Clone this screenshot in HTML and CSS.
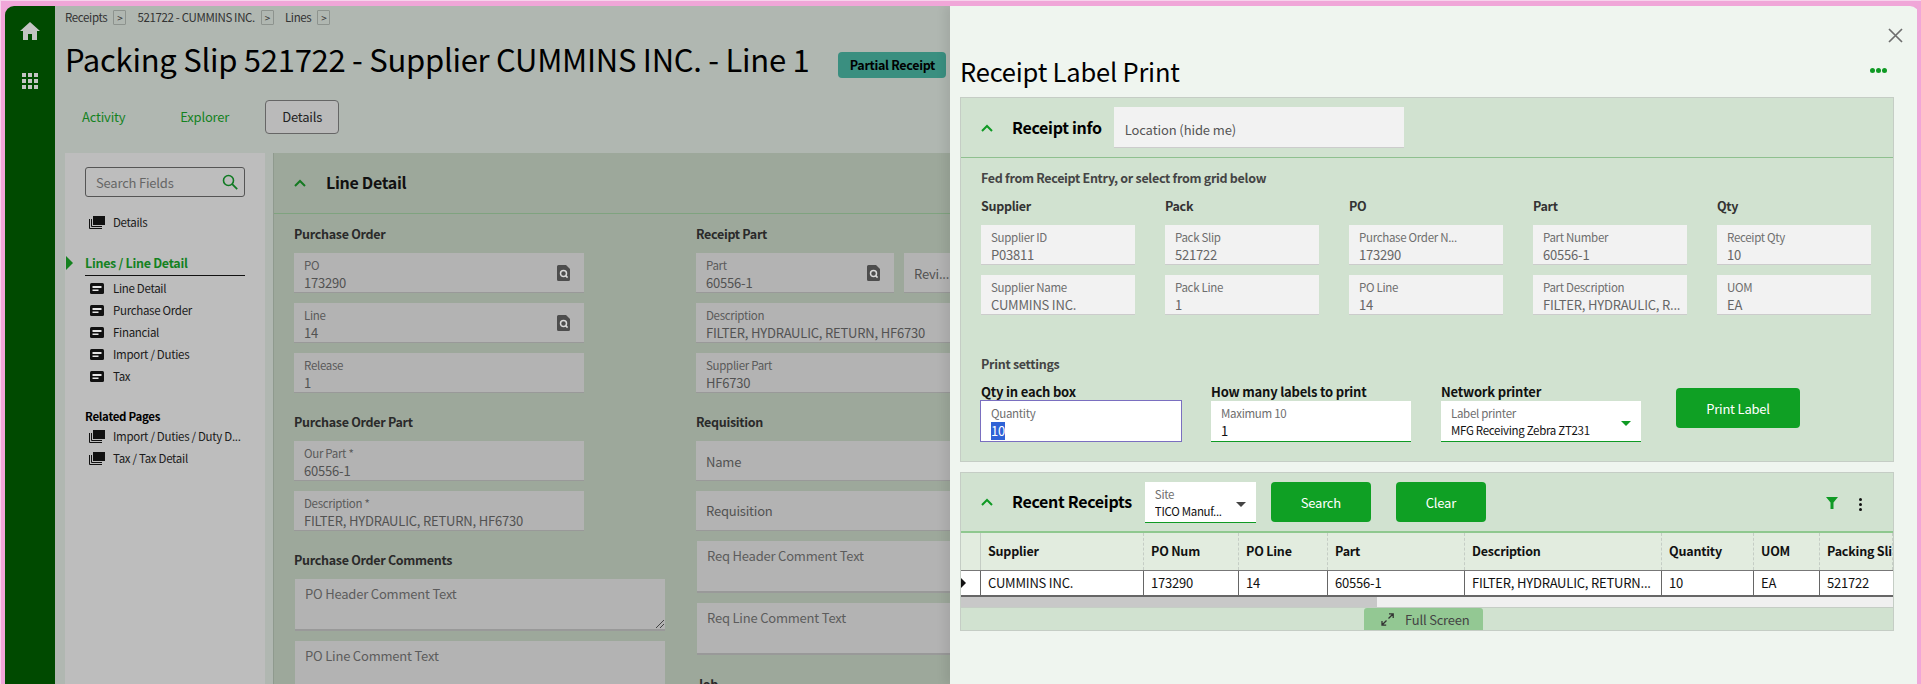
FILE: index.html
```html
<!DOCTYPE html>
<html lang="en">
<head>
<meta charset="utf-8">
<title>Receipt Label Print</title>
<link rel="stylesheet" href="styles.css">
</head>
<body>
<svg class="defs" width="0" height="0" aria-hidden="true">
  <symbol id="i-chev" viewBox="0 0 12 8"><path d="M1 7l5-5 5 5" fill="none" stroke="currentColor" stroke-width="2"/></symbol>
  <symbol id="i-stack" viewBox="0 0 16 13"><path d="M4 0h12v9H4z" fill="currentColor"/><path d="M.5 3v9.5H13" fill="none" stroke="currentColor" stroke-width="1"/><path d="M2.5 3v7.500H13" fill="none" stroke="currentColor" stroke-width="1"/></symbol>
  <symbol id="i-card" viewBox="0 0 14 11"><rect width="14" height="11" rx="1.500" fill="currentColor"/><path d="M2.500 3h9v2h-9zM2.500 6.500h6v1.500h-6z" fill="#e6e6e6"/></symbol>
  <symbol id="i-lookup" viewBox="0 0 13 16"><path d="M1.500 0H9l4 4v10.500a1.500 1.500 0 0 1-1.500 1.500h-10A1.500 1.500 0 0 1 0 14.500v-13A1.500 1.500 0 0 1 1.500 0z" fill="#4d4d4d"/><circle cx="6.500" cy="8.500" r="3" fill="none" stroke="#d8d8d8" stroke-width="1.500"/><path d="M8.600 10.600l2 2" stroke="#d8d8d8" stroke-width="1.500"/></symbol>
</svg>
<div class="app">
  <nav class="rail">
    <svg class="rail-home" viewBox="0 0 20 18"><path d="M10 0l10 9h-3v9h-5v-6H8v6H3V9H0z" fill="#c4c4c4"/></svg>
    <div class="rail-grid"><i></i><i></i><i></i><i></i><i></i><i></i><i></i><i></i><i></i></div>
  </nav>

  <main class="page">
    <div class="crumbs">
      <span>Receipts</span><b class="crumb-btn">&gt;</b>
      <span>521722 - CUMMINS INC.</span><b class="crumb-btn">&gt;</b>
      <span>Lines</span><b class="crumb-btn">&gt;</b>
    </div>
    <div class="title-row">
      <h1 class="page-title">Packing Slip 521722 - Supplier CUMMINS INC. - Line 1</h1>
      <span class="badge">Partial Receipt</span>
    </div>
    <div class="tabs">
      <a class="tab">Activity</a>
      <a class="tab">Explorer</a>
      <a class="tab tab-on">Details</a>
    </div>
    <div class="work">
      <aside class="side">
        <div class="search">
          <span>Search Fields</span>
          <svg viewBox="0 0 16 16"><circle cx="6.500" cy="6.500" r="5" fill="none" stroke="#0f7a22" stroke-width="1.600"/><path d="M10.200 10.200l5 5" stroke="#0f7a22" stroke-width="1.800"/></svg>
        </div>
        <div class="side-item side-top"><svg class="ic-stack"><use href="#i-stack"/></svg>Details</div>
        <div class="side-group">Lines / Line Detail</div>
        <div class="side-item"><svg class="ic-card"><use href="#i-card"/></svg>Line Detail</div>
        <div class="side-item"><svg class="ic-card"><use href="#i-card"/></svg>Purchase Order</div>
        <div class="side-item"><svg class="ic-card"><use href="#i-card"/></svg>Financial</div>
        <div class="side-item"><svg class="ic-card"><use href="#i-card"/></svg>Import / Duties</div>
        <div class="side-item"><svg class="ic-card"><use href="#i-card"/></svg>Tax</div>
        <div class="side-rel">Related Pages</div>
        <div class="side-item"><svg class="ic-stack"><use href="#i-stack"/></svg>Import / Duties / Duty D...</div>
        <div class="side-item"><svg class="ic-stack"><use href="#i-stack"/></svg>Tax / Tax Detail</div>
      </aside>
      <section class="detail">
        <header class="detail-head">
          <svg class="chev dark"><use href="#i-chev"/></svg>
          <h2>Line Detail</h2>
        </header>
        <div class="detail-cols">
          <div class="col-a">
            <h3>Purchase Order</h3>
            <div class="fld w290"><label>PO</label><span>173290</span><svg class="lookup"><use href="#i-lookup"/></svg></div>
            <div class="fld w290"><label>Line</label><span>14</span><svg class="lookup"><use href="#i-lookup"/></svg></div>
            <div class="fld w290"><label>Release</label><span>1</span></div>
            <h3>Purchase Order Part</h3>
            <div class="fld w290"><label>Our Part *</label><span>60556-1</span></div>
            <div class="fld w290"><label>Description *</label><span>FILTER, HYDRAULIC, RETURN, HF6730</span></div>
            <h3>Purchase Order Comments</h3>
            <div class="area">PO Header Comment Text<svg class="grip" viewBox="0 0 8 8"><path d="M0 8l8-8M4 8l4-4" stroke="#444" stroke-width="1"/></svg></div>
            <div class="area">PO Line Comment Text</div>
          </div>
          <div class="col-b">
            <h3>Receipt Part</h3>
            <div class="part-row">
              <div class="fld w198"><label>Part</label><span>60556-1</span><svg class="lookup"><use href="#i-lookup"/></svg></div>
              <div class="fld fld-ph w100"><span>Revi...</span></div>
            </div>
            <div class="fld"><label>Description</label><span>FILTER, HYDRAULIC, RETURN, HF6730</span></div>
            <div class="fld"><label>Supplier Part</label><span>HF6730</span></div>
            <h3>Requisition</h3>
            <div class="fld fld-ph"><span>Name</span></div>
            <div class="fld fld-ph fld-ph-up"><span>Requisition</span></div>
            <div class="area area-r">Req Header Comment Text</div>
            <div class="area area-r">Req Line Comment Text</div>
            <h3>Job</h3>
          </div>
        </div>
      </section>
    </div>
  </main>

  <aside class="drawer">
    <svg class="close" viewBox="0 0 15 15"><path d="M1 1l13 13M14 1L1 14" stroke="#6e6e6e" stroke-width="1.700"/></svg>
    <div class="drawer-head">
      <h1 class="drawer-title">Receipt Label Print</h1>
      <div class="dots"><i></i><i></i><i></i></div>
    </div>

    <section class="panel">
      <header class="panel-head">
        <svg class="chev"><use href="#i-chev"/></svg>
        <h2>Receipt info</h2>
        <div class="loc">Location (hide me)</div>
      </header>
      <div class="panel-body">
        <p class="note">Fed from Receipt Entry, or select from grid below</p>
        <div class="info-grid">
          <div>
            <h4>Supplier</h4>
            <div class="fld lt"><label>Supplier ID</label><span>P03811</span></div>
            <div class="fld lt"><label>Supplier Name</label><span>CUMMINS INC.</span></div>
          </div>
          <div>
            <h4>Pack</h4>
            <div class="fld lt"><label>Pack Slip</label><span>521722</span></div>
            <div class="fld lt"><label>Pack Line</label><span>1</span></div>
          </div>
          <div>
            <h4>PO</h4>
            <div class="fld lt"><label>Purchase Order N...</label><span>173290</span></div>
            <div class="fld lt"><label>PO Line</label><span>14</span></div>
          </div>
          <div>
            <h4>Part</h4>
            <div class="fld lt"><label>Part Number</label><span>60556-1</span></div>
            <div class="fld lt"><label>Part Description</label><span>FILTER, HYDRAULIC, R...</span></div>
          </div>
          <div>
            <h4>Qty</h4>
            <div class="fld lt"><label>Receipt Qty</label><span>10</span></div>
            <div class="fld lt"><label>UOM</label><span>EA</span></div>
          </div>
        </div>
        <p class="note note-print">Print settings</p>
        <div class="print-row">
          <div class="print-a">
            <h5>Qty in each box</h5>
            <div class="inp inp-focus"><label>Quantity</label><span><mark>10</mark></span></div>
          </div>
          <div class="print-b">
            <h5>How many labels to print</h5>
            <div class="inp"><label>Maximum 10</label><span>1</span></div>
          </div>
          <div class="print-b">
            <h5>Network printer</h5>
            <div class="inp"><label>Label printer</label><span class="sel">MFG Receiving Zebra ZT231</span><i class="caret green"></i></div>
          </div>
          <button class="btn btn-print">Print Label</button>
        </div>
      </div>
    </section>

    <section class="panel panel-grid">
      <header class="panel-head rec-head">
        <svg class="chev"><use href="#i-chev"/></svg>
        <h2>Recent Receipts</h2>
        <div class="inp site"><label>Site</label><span class="sel">TICO Manuf...</span><i class="caret"></i></div>
        <button class="btn btn-search">Search</button>
        <button class="btn btn-clear">Clear</button>
        <svg class="funnel" viewBox="0 0 12 12"><path d="M0 0h12L7.500 5.500V12h-3V5.500z" fill="#0f9a24"/></svg>
        <div class="kebab"><i></i><i></i><i></i></div>
      </header>
      <div class="grid-wrap">
        <div class="grid grid-h">
          <div></div><div>Supplier</div><div>PO Num</div><div>PO Line</div><div>Part</div><div>Description</div><div>Quantity</div><div>UOM</div><div>Packing Slip</div>
        </div>
        <div class="grid grid-r">
          <div class="sel-cell"><i></i></div><div>CUMMINS INC.</div><div>173290</div><div>14</div><div>60556-1</div><div>FILTER, HYDRAULIC, RETURN...</div><div>10</div><div>EA</div><div>521722</div>
        </div>
        <div class="hscroll"><i></i></div>
      </div>
      <div class="fs-strip">
        <div class="fs-tab">
          <svg viewBox="0 0 13 13"><path d="M7.500 5.500L12 1M8 .8h4.200V5M5.500 7.500L1 12M1 8v4.200h4.200" fill="none" stroke="#333" stroke-width="1.300"/></svg>
          Full Screen
        </div>
      </div>
    </section>
  </aside>
</div>
</body>
</html>
```
FILE: styles.css
```css
* { box-sizing: border-box; }
html, body { margin: 0; height: 684px; overflow: hidden; }
body {
  background: #f0a6d8;
  border-top: 1px solid #f7d3ec;
  border-left: 1px solid #f7d3ec;
  padding: 5px 4px 0 4px;
  font-family: "Noto Sans CJK SC", "Noto Sans", sans-serif;
  font-size: 13px;
  letter-spacing: -.2px;
  line-height: 17px;
  color: #000;
}
.defs { position: absolute; }
h1, h2, h3, h4, h5, p { margin: 0; font-weight: 400; }

.app { display: flex; height: 678px; overflow: hidden; }

.rail {
  width: 50px; flex: none;
  background: #004a00;
  border-top-left-radius: 9px;
  display: flex; flex-direction: column; align-items: center;
  padding-top: 16px;
}
.rail-home { width: 20px; height: 18px; }
.rail-grid { margin-top: 33px; display: grid; grid-template-columns: repeat(3, 4px); gap: 2px; }
.rail-grid i { width: 4px; height: 4px; background: #c4c4c4; }

.page { width: 895px; flex: none; background: #b0b7b1; padding-left: 10px; overflow: hidden; }
.crumbs { display: flex; align-items: center; height: 22px; font-size: 11.500px; letter-spacing: -.35px; color: #333; }
.crumbs span { margin-right: 6px; }
.crumb-btn {
  width: 13px; height: 15px; margin-right: 11px;
  border: 1px solid #8d938e; border-radius: 1px;
  font-weight: 400; font-size: 10px; line-height: 13px; text-align: center;
}
.title-row { display: flex; align-items: flex-start; height: 72px; }
.page-title { font-size: 31px; letter-spacing: -.27px; line-height: 44px; margin-top: 9px; white-space: nowrap; }
.badge {
  margin-left: 29px; margin-top: 24px;
  width: 108px; height: 26px; line-height: 26px; text-align: center; white-space: nowrap;
  background: #3a8f80; border-radius: 4px; font-weight: 600; font-size: 12.500px; letter-spacing: -.3px;
}
.tabs { display: flex; height: 34px; align-items: center; }
.tab { color: #14821f; line-height: 34px; }
.tab:nth-child(1) { margin-left: 17px; }
.tab:nth-child(2) { margin-left: 55px; }
.tab-on {
  margin-left: 36px; width: 74px; text-align: center; height: 34px; line-height: 32px;
  color: #222; background: #bababa; border: 1px solid #666; border-radius: 4px;
}
.work { display: flex; margin-top: 19px; gap: 8px; height: 531px; }

.side { width: 200px; flex: none; background: #bdbdbd; padding: 14px 20px 0; }
.search {
  height: 30px; border: 1px solid #555; border-radius: 3px;
  display: flex; align-items: center; justify-content: space-between;
  padding: 0 6px 0 10px; color: #666;
}
.search svg { width: 16px; height: 16px; }
.side-item { display: flex; align-items: center; height: 22px; font-size: 11.500px; letter-spacing: -.3px; color: #1a1a1a; white-space: nowrap; padding-left: 4px; }
.side-top { margin-top: 14px; margin-bottom: 19px; }
.ic-stack { width: 16px; height: 13px; margin-right: 8px; color: #111; flex: none; }
.ic-card { width: 14px; height: 11px; margin: 0 9px 0 1px; color: #111; flex: none; }
.side-group {
  position: relative; height: 24px; line-height: 21px; margin-bottom: 1px;
  color: #14821f; font-weight: 600; font-size: 12.500px; letter-spacing: -.3px; border-bottom: 1px solid #111;
}
.side-group::before {
  content: ""; position: absolute; left: -19px; top: 4px;
  border-left: 7px solid #14821f; border-top: 7px solid transparent; border-bottom: 7px solid transparent;
}
.side-rel { font-size: 11.500px; letter-spacing: -.3px; font-weight: 600; margin-top: 20px; line-height: 18px; }

.detail { flex: 1; background: #9da89b; border-left: 1px solid #8f9a8e; overflow: hidden; }
.detail-head { height: 61px; display: flex; align-items: center; padding-left: 20px; border-bottom: 1px solid #7fa37f; }
.detail-head h2 { font-size: 16px; letter-spacing: -.3px; font-weight: 600; margin: 0 0 2px 20px; color: #111; line-height: 24px; }
.chev { width: 12px; height: 8px; color: #0f9a24; flex: none; }
.chev.dark { color: #157a22; }
.detail-cols { display: flex; padding: 10px 0 0 20px; }
.col-a { width: 372px; flex: none; }
.col-b { margin-left: 30px; width: 300px; flex: none; }
h3 { font-size: 12.500px; letter-spacing: -.3px; font-weight: 600; line-height: 19px; color: #2a2a2a; margin: 19px 0 10px; }
.col-a > h3:first-child, .col-b > h3:first-child { margin: 0 0 10px; }
.fld {
  position: relative; height: 40px; margin-bottom: 10px; padding: 4px 10px 0;
  background: #b3b3b3; border-bottom: 1px solid #999; color: #525252;
  white-space: nowrap; overflow: hidden;
}
.fld label { display: block; font-size: 11.500px; letter-spacing: -.3px; line-height: 17px; color: #5a5a5a; }
.fld span { display: block; line-height: 17px; }
.fld-ph { padding-top: 12px; }
.fld-ph-up { padding-top: 11px; }
.w290 { width: 290px; }
.w198 { width: 198px; flex: none; }
.w100 { width: 100px; flex: none; }
.part-row { display: flex; gap: 10px; }
.lookup { position: absolute; right: 14px; top: 12px; width: 13px; height: 16px; }
.area {
  position: relative; width: 370px; height: 52px; margin: 0 0 10px 1px; padding: 6px 10px;
  background: #b3b3b3; border-bottom: 2px solid #999; color: #5c5c5c; line-height: 17px;
}
.area-r { width: 300px; height: 52px; margin-top: 1px; }
.grip { position: absolute; right: 1px; bottom: 1px; width: 8px; height: 8px; }

.drawer {
  position: relative; flex: 1; background: #eff5ef;
  border-top-right-radius: 9px; padding: 0 25px 0 10px;
  box-shadow: -6px 0 8px rgba(0,0,0,.07);
}
.close { position: absolute; right: 16px; top: 22px; width: 15px; height: 15px; }
.drawer-head { display: flex; justify-content: space-between; align-items: center; height: 91px; padding: 38px 7px 0 0; }
.drawer-title { font-size: 25.500px; letter-spacing: -.2px; line-height: 36px; }
.dots { display: flex; gap: 1px; }
.dots i { width: 5px; height: 5px; border-radius: 50%; background: #0f9a24; }

.panel { background: #d1e2d0; border: 1px solid #c5cdc5; }
.panel-head { display: flex; align-items: center; height: 60px; padding-left: 20px; border-bottom: 1px solid #8fc08f; }
.panel-head h2 { font-size: 16px; letter-spacing: -.3px; font-weight: 600; margin: 0 0 2px 19px; line-height: 24px; white-space: nowrap; }
.loc {
  margin-left: 12px; width: 290px; height: 41px; padding: 14px 11px 0; letter-spacing: -.1px;
  background: #f2f2f2; border-bottom: 1px solid #ccc; color: #555;
}
.panel-body { height: 303px; padding: 10px 20px 0; }
.note { font-size: 12.500px; letter-spacing: -.3px; font-weight: 600; color: #444; line-height: 20px; }
.info-grid { display: grid; grid-template-columns: repeat(5, 154px); column-gap: 30px; margin-top: 8px; }
h4 { font-size: 12.500px; letter-spacing: -.3px; font-weight: 600; color: #333; line-height: 20px; margin-bottom: 9px; }
.fld.lt { background: #f2f2f2; border-bottom-color: #ccc; color: #666; }
.fld.lt label { color: #6e6e6e; }
.note-print { margin-top: 29px; }
.print-row { display: flex; align-items: flex-start; margin-top: 8px; margin-left: -1px; }
.print-a { width: 231px; flex: none; }
.print-b { width: 230px; flex: none; }
.print-a h5, .print-b h5 { margin: 0 0 0 1px; font-size: 13px; font-weight: 600; line-height: 19px; color: #111; height: 19px; white-space: nowrap; }
.print-b h5 { margin-left: 0; }
.inp {
  position: relative; width: 200px; height: 41px; padding: 4px 10px 0;
  background: #fff; border-bottom: 1px solid #0f9a24; white-space: nowrap;
}
.inp label { display: block; font-size: 11.500px; letter-spacing: -.3px; line-height: 17px; color: #6e6e6e; }
.inp span { display: block; line-height: 17px; color: #111; }
.inp .sel { font-size: 11.500px; letter-spacing: -.3px; }
.inp-focus { width: 202px; height: 42px; margin-top: -1px; padding: 4px 10px 0; border: 1px solid #7a6fc0; }
mark { background: #2f62d6; color: #fff; display: inline-block; line-height: 18px; }
.caret {
  position: absolute; right: 10px; top: 20px;
  border-left: 5px solid transparent; border-right: 5px solid transparent; border-top: 5px solid #444;
}
.caret.green { border-top-color: #0f9a24; }
.btn {
  font: inherit; letter-spacing: inherit; color: #fff; background: #0fa024; border: 0; border-radius: 4px; height: 40px;
}
.btn-print { width: 124px; margin: 6px 0 0 5px; }
.btn-search { width: 100px; margin-left: 15px; }
.btn-clear { width: 90px; margin-left: 25px; }

.panel-grid { margin-top: 10px; height: 159px; }
.rec-head { position: relative; border-bottom: 2px solid #8fc88f; padding-bottom: 0; }
.site { width: 111px; margin-left: 13px; }
.site .sel { overflow: hidden; }
.funnel { position: absolute; right: 55px; top: 24px; width: 12px; height: 12px; }
.kebab { position: absolute; right: 31px; top: 25px; display: grid; gap: 2px; }
.kebab i { width: 3px; height: 3px; border-radius: 50%; background: #111; }

.grid-wrap { overflow: hidden; }
.grid { display: grid; grid-template-columns: 20px 163px 95px 89px 137px 197px 92px 66px 73px; }
.grid > div { padding-left: 7px; white-space: nowrap; overflow: hidden; }
.grid-h { height: 38px; background: #e2ecdf; font-weight: 600; font-size: 12.500px; border-bottom: 1px solid #777; color: #111; }
.grid-h > div { line-height: 35px; border-right: 1px dashed #c5cdc5; }
.grid-h > div:first-child { border-right: 1px solid #c5cdc5; }
.grid-r { height: 26px; background: #fff; border-bottom: 2px solid #666; color: #111; }
.grid-r > div { line-height: 23px; border-right: 1px solid #666; }
.grid-r > div:last-child { border-right: 0; }
.sel-cell { position: relative; padding: 0; }
.sel-cell i {
  position: absolute; left: 0; top: 7px;
  border-left: 5px solid #111; border-top: 5px solid transparent; border-bottom: 5px solid transparent;
}
.grid-r > .sel-cell { padding-left: 0; }
.hscroll { height: 11px; background: #f0f0f0; border-bottom: 1px solid #c5cdc5; }
.hscroll i { display: block; width: 416px; height: 10px; background: #c8c8c8; }
.fs-strip { display: flex; justify-content: flex-start; padding-left: 403px; }
.fs-tab {
  display: flex; align-items: center; width: 119px; height: 22px; padding-left: 17px;
  background: #93c893; border-radius: 3px 3px 0 0; color: #444;
}
.fs-tab svg { width: 13px; height: 13px; margin-right: 11px; }
```
